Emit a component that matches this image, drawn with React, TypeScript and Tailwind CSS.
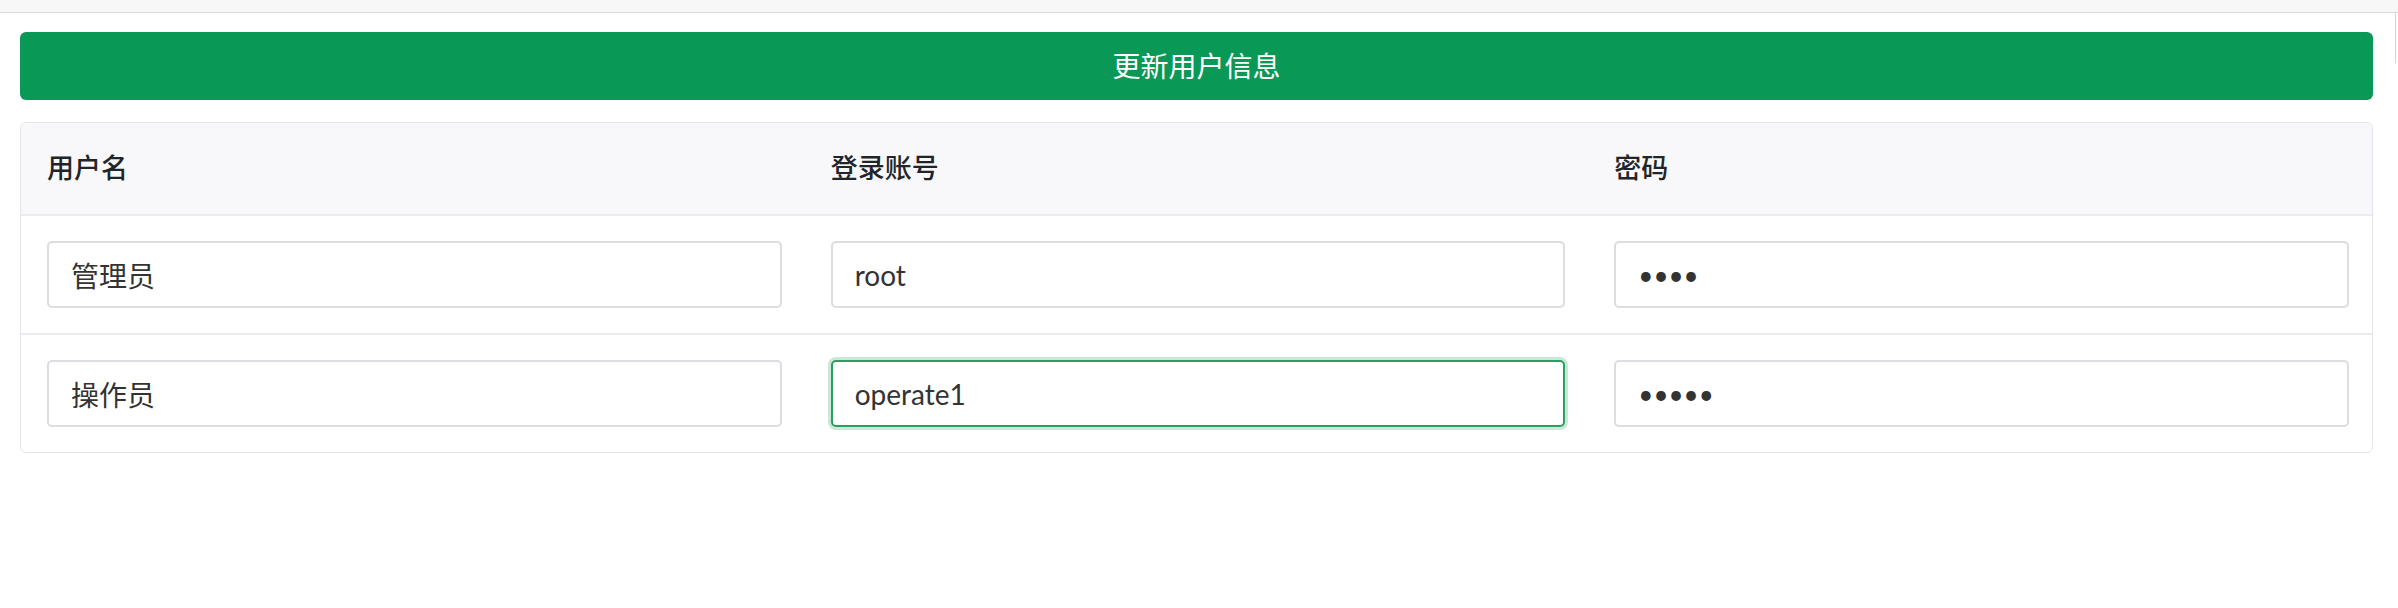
import React from "react";

const font = {
  fontFamily:
    '"Lato", "Noto Sans CJK SC", "Noto Sans", sans-serif',
};

const users = [
  { name: "管理员", account: "root", password: "1234", focused: false },
  { name: "操作员", account: "operate1", password: "12345", focused: true },
];

const headers = ["用户名", "登录账号", "密码"];

function Field({
  value,
  type = "text",
  focused = false,
}: {
  value: string;
  type?: string;
  focused?: boolean;
}) {
  return (
    <input
      type={type}
      defaultValue={value}
      readOnly
      style={font}
      className={
        "h-[67px] w-full rounded-[5px] border-2 bg-white pl-[22px] text-[#333] outline-none " +
        (type === "password" ? "text-[26px] " : "text-[28px] ") +
        (focused
          ? "border-[#27a062] ring-[3px] ring-[#c9e9d6]"
          : "border-[#dcdce1]")
      }
    />
  );
}

export default function App() {
  return (
    <div className="min-h-[608px] w-full bg-white" style={font}>
      {/* top strip */}
      <div className="h-[13px] border-b border-[#d9d9d9] bg-[#f7f7f7]" />

      <div className="flex">
        <div className="flex-1 pl-[20px] pr-[22px] pt-[19px]">
          <button
            type="button"
            className="flex h-[68px] w-full items-center justify-center rounded-[6px] bg-[#0a9856] text-[28px] text-white"
          >
            更新用户信息
          </button>

          <div className="mt-[22px] overflow-hidden rounded-[6px] border border-[#e4e4ea]">
            <div className="grid h-[93px] grid-cols-3 items-center border-b-2 border-[#ebebf0] bg-[#f8f8fa]">
              {headers.map((h) => (
                <div
                  key={h}
                  className="pl-[26px] pr-6 text-[27px] font-medium text-[#212529]"
                >
                  {h}
                </div>
              ))}
            </div>

            {users.map((u, i) => (
              <div
                key={u.account}
                className={
                  "grid grid-cols-3 py-[25px] " +
                  (i > 0 ? "border-t-2 border-[#ebebf0]" : "")
                }
              >
                <div className="pl-[26px] pr-[23px]">
                  <Field value={u.name} />
                </div>
                <div className="pl-[26px] pr-[23px]">
                  <Field value={u.account} focused={u.focused} />
                </div>
                <div className="pl-[26px] pr-[23px]">
                  <Field value={u.password} type="password" />
                </div>
              </div>
            ))}
          </div>
        </div>
        <div className="w-[3px] self-start">
          <div className="h-[50px] border-l border-[#d4d4d4]" />
        </div>
      </div>
    </div>
  );
}
